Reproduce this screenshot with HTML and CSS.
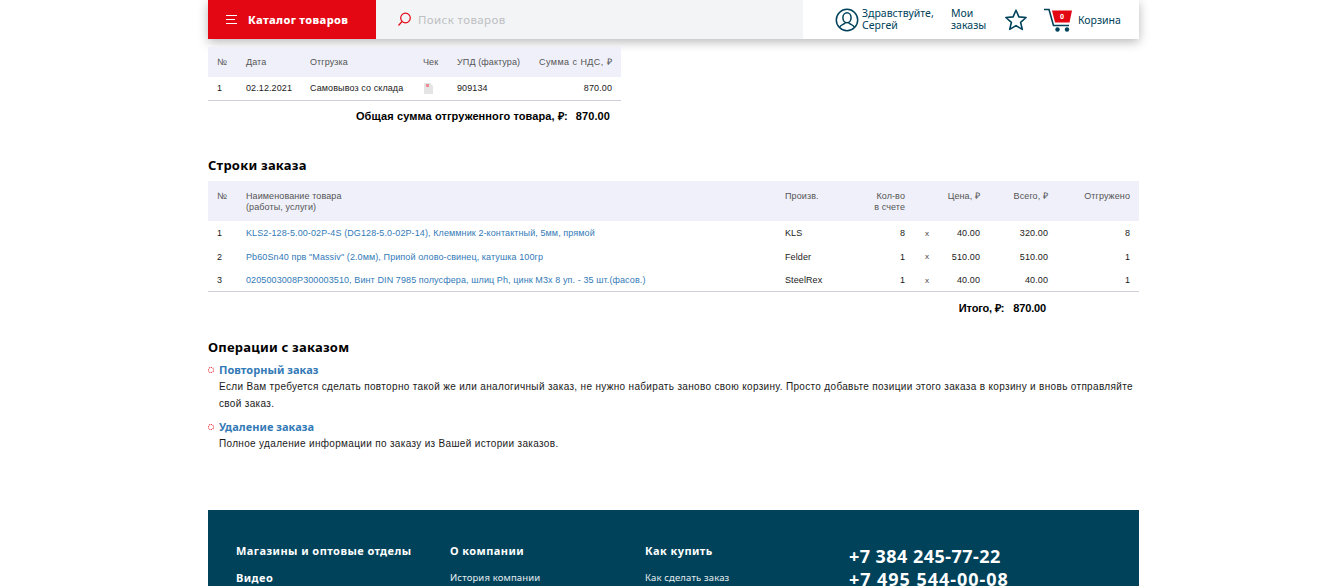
FILE: index.html
```html
<!DOCTYPE html>
<html lang="ru">
<head>
<meta charset="utf-8">
<title>Заказ</title>
<link rel="stylesheet" href="styles.css">
</head>
<body>
<div class="page">
  <header class="topbar">
    <a class="catalog">
      <svg class="burger" width="12" height="9" viewBox="0 0 12 9"><path d="M0 .5h11M0 4.500h9M0 8.500h11" stroke="#fff" stroke-width="1" fill="none"/></svg>
      <span>Каталог товаров</span>
    </a>
    <div class="search">
      <svg width="15" height="15" viewBox="0 0 15 15"><circle cx="8.500" cy="6" r="4.800" fill="none" stroke="#e30613" stroke-width="1.200"/><path d="M5 9.500 1.500 13.500" stroke="#e30613" stroke-width="1.200"/></svg>
      <span>Поиск товаров</span>
    </div>
    <nav class="usernav">
      <div class="user">
        <svg width="24" height="24" viewBox="0 0 24 24" fill="none" stroke="#00425a" stroke-width="1.500"><circle cx="12" cy="12" r="10.700"/><ellipse cx="12" cy="9.800" rx="4.100" ry="5"/><path d="M4.500 19.500c1-3 4.500-3 5.800-4.800M19.500 19.500c-1-3-4.500-3-5.800-4.800"/></svg>
        <span class="lift">Здравствуйте,<br>Сергей</span>
      </div>
      <span class="orders lift">Мои<br>заказы</span>
      <svg class="star" width="24" height="23" viewBox="0 0 24 23"><path d="M12 2.200l2.900 6.700 7.200.6-5.500 4.800 1.700 7.100-6.300-3.800-6.300 3.800 1.700-7.100L1.900 9.500l7.200-.6z" fill="none" stroke="#00425a" stroke-width="1.600" stroke-linejoin="round"/></svg>
      <div class="cart">
        <svg width="29" height="24" viewBox="0 0 29 24"><path d="M0 1.500h5l4.500 16h15.500" fill="none" stroke="#00425a" stroke-width="1.600"/><path d="M8 2.500h20l-2.500 12H11z" fill="#e30613"/><circle cx="13.500" cy="21.500" r="2.200" fill="#00425a"/><circle cx="23" cy="21.500" r="2.200" fill="#00425a"/><text x="18" y="10.500" class="cartcount">0</text></svg>
        <span>Корзина</span>
      </div>
    </nav>
  </header>

  <main class="content">
    <table class="grid shipments">
      <thead>
        <tr><th class="c-n">№</th><th class="s-date">Дата</th><th class="s-ship">Отгрузка</th><th class="s-chk">Чек</th><th class="s-upd">УПД (фактура)</th><th class="num s-sum">Сумма с НДС, ₽</th></tr>
      </thead>
      <tbody>
        <tr>
          <td class="c-n">1</td><td>02.12.2021</td><td>Самовывоз со склада</td>
          <td><svg class="doc" width="9" height="11" viewBox="0 0 9 11"><path d="M0 0h6l3 3v8H0z" fill="#e4e4e4"/><rect x="2" y="1" width="3" height="3" fill="#ee8a92"/></svg></td>
          <td>909134</td><td class="num">870.00</td>
        </tr>
      </tbody>
    </table>
    <p class="shiptotal"><span>Общая сумма отгруженного товара, ₽:</span><span>870.00</span></p>

    <h2 class="title lines-title">Строки заказа</h2>
    <table class="grid lines">
      <thead>
        <tr>
          <th class="c-n">№</th>
          <th class="l-name">Наименование товара<br>(работы, услуги)</th>
          <th class="l-brand">Произв.</th>
          <th class="num l-qty">Кол-во<br>в счете</th>
          <th class="l-x"></th>
          <th class="num l-price">Цена, ₽</th>
          <th class="num l-total">Всего, ₽</th>
          <th class="num l-ship">Отгружено</th>
        </tr>
      </thead>
      <tbody>
        <tr><td class="c-n">1</td><td><a>KLS2-128-5.00-02P-4S (DG128-5.0-02P-14), Клеммник 2-контактный, 5мм, прямой</a></td><td>KLS</td><td class="num">8</td><td class="x">x</td><td class="num">40.00</td><td class="num">320.00</td><td class="num">8</td></tr>
        <tr><td class="c-n">2</td><td><a>Pb60Sn40 прв "Massiv" (2.0мм), Припой олово-свинец, катушка 100гр</a></td><td>Felder</td><td class="num">1</td><td class="x">x</td><td class="num">510.00</td><td class="num">510.00</td><td class="num">1</td></tr>
        <tr><td class="c-n">3</td><td><a>0205003008P300003510, Винт DIN 7985 полусфера, шлиц Ph, цинк М3х 8 уп. - 35 шт.(фасов.)</a></td><td>SteelRex</td><td class="num">1</td><td class="x">x</td><td class="num">40.00</td><td class="num">40.00</td><td class="num">1</td></tr>
      </tbody>
    </table>
    <p class="linestotal"><span>Итого, ₽:</span><span>870.00</span></p>

    <h2 class="title ops-title">Операции с заказом</h2>
    <section class="op">
      <h3><i class="bullet"></i>Повторный заказ</h3>
      <p>Если Вам требуется сделать повторно такой же или аналогичный заказ, не нужно набирать заново свою корзину. Просто добавьте позиции этого заказа в корзину и вновь отправляйте свой заказ.</p>
    </section>
    <section class="op">
      <h3><i class="bullet"></i>Удаление заказа</h3>
      <p>Полное удаление информации по заказу из Вашей истории заказов.</p>
    </section>
  </main>

  <footer class="footer">
    <div class="fcol f1"><b>Магазины и оптовые отделы</b><b class="second">Видео</b></div>
    <div class="fcol f2"><b>О компании</b><a>История компании</a></div>
    <div class="fcol f3"><b>Как купить</b><a>Как сделать заказ</a></div>
    <div class="phones"><strong>+7 384 245-77-22</strong><strong class="phone2">+7 495 544-00-08</strong></div>
  </footer>
</div>
</body>
</html>
```
FILE: styles.css
```css
* { box-sizing: border-box; }
html, body { margin: 0; height: 586px; overflow: hidden; background: #fff; }
body { font-family: "Liberation Sans", Arial, sans-serif; font-size: 9px; color: #1a1a1a; }
.page { width: 931px; margin-left: 208px; }

.topbar { display: flex; height: 39px; background: #fff; box-shadow: 0 3px 10px rgba(0,0,0,.28); font-family: "Noto Sans", sans-serif; }
.catalog { width: 168px; background: #e30613; color: #fff; display: flex; align-items: center; padding-left: 18px; gap: 10px; font-weight: 800; font-size: 11px; letter-spacing: .35px; }
.search { width: 427px; background: #f3f4f6; display: flex; align-items: center; padding-left: 21px; gap: 6px; color: #bdbfc3; font-size: 11.500px; letter-spacing: .4px; }
.usernav { flex: 1; display: flex; align-items: center; color: #00425a; font-size: 10.500px; line-height: 12px; padding-left: 32px; }
.lift { margin-bottom: 2px; }
.user { display: flex; align-items: center; gap: 3px; width: 116px; }
.orders { width: 53px; }
.star { margin-right: 17px; }
.cart { display: flex; align-items: center; gap: 5px; margin-left: -1px; }
.cartcount { font-size: 7px; font-weight: 700; fill: #fff; text-anchor: middle; }

.content { display: block; }
.grid { border-collapse: collapse; table-layout: fixed; font-size: 9px; letter-spacing: .1px; border-bottom: 1px solid #d0d0dc; }
.grid th { background: #eff0f9; font-weight: 400; color: #555; text-align: left; vertical-align: top; line-height: 12px; padding: 9px 9px 0 0; }
.grid td { padding: 0 9px 0 0; color: #1a1a1a; }
.grid .num { text-align: right; }
.grid .c-n { padding-left: 9px; width: 38px; }
.grid a { color: #337ab7; }

.shipments { width: 413px; margin-top: 8px; }
.shipments thead tr { height: 30px; }
.shipments tbody tr { height: 23px; }
.s-date { width: 64px; }
.s-ship { width: 113px; }
.s-chk { width: 34px; }
.s-upd { width: 82px; }
.s-sum { letter-spacing: .45px; white-space: nowrap; }
.doc { display: block; margin-left: 1px; }
.shiptotal { width: 402px; margin: 9px 0 0; display: flex; justify-content: flex-end; gap: 8px; font-weight: 700; font-size: 11px; line-height: 12px; letter-spacing: .1px; color: #000; }

.title { font-family: "Noto Sans", sans-serif; font-size: 13px; font-weight: 700; line-height: 16px; letter-spacing: .22px; color: #000; margin: 0; }
.lines-title { margin-top: 35px; }
.lines { width: 931px; margin-top: 8px; }
.lines thead tr { height: 40px; }
.lines th { line-height: 11px; padding-top: 10px; }
.lines tbody tr { height: 23.670px; }
.lines td { padding-top: 2px; }
.l-name { width: 539px; }
.l-brand { width: 62px; }
.l-qty { width: 67px; }
.l-x { width: 18px; }
.l-price { width: 57px; }
.l-total { width: 68px; }
.lines td.x { font-size: 8px; padding-left: 11px; padding-right: 0; color: #444; }
.linestotal { width: 838px; margin: 10px 0 0; display: flex; justify-content: flex-end; gap: 9px; font-weight: 700; font-size: 11px; line-height: 12px; letter-spacing: -.15px; color: #000; }

.ops-title { margin-top: 25px; }
.op { margin-top: 8px; }
.op h3 { margin: 0; font-family: "Noto Sans", sans-serif; font-size: 11px; line-height: 14px; font-weight: 700; letter-spacing: .05px; color: #337ab7; display: flex; align-items: center; }
.bullet { width: 6px; height: 6px; border: 1px dotted #e30613; border-radius: 50%; margin-right: 5px; }
.op p { margin: 1px 0 0 11px; font-size: 10px; line-height: 17px; letter-spacing: .33px; color: #1a1a1a; }

.footer { position: relative; margin-top: 58px; height: 180px; background: #00425a; color: #fff; display: flex; padding: 33px 0 0 28px; font-family: "Noto Sans", sans-serif; }
.fcol { display: flex; flex-direction: column; }
.fcol b { font-size: 11px; line-height: 16px; font-weight: 700; letter-spacing: .44px; }
.fcol a { font-size: 9.500px; line-height: 14px; margin-top: 12px; letter-spacing: .15px; color: #e6eef1; }
.fcol .second { margin-top: 11px; }
.f1 { width: 214px; }
.f2 { width: 195px; }
.f3 { width: 204px; }
.phones { display: flex; flex-direction: column; margin-top: 2px; }
.phones strong { font-size: 18px; line-height: 23px; font-weight: 700; letter-spacing: .45px; }
.phones .phone2 { letter-spacing: .95px; }
```
